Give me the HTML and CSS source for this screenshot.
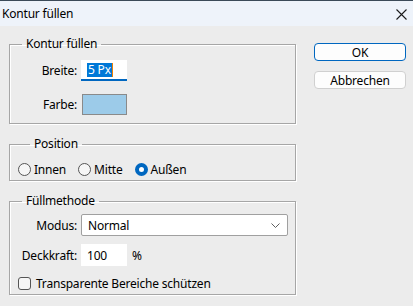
FILE: index.html
```html
<!DOCTYPE html>
<html lang="de">
<head>
    <meta charset="UTF-8">
    <meta name="viewport" content="width=device-width, initial-scale=1.0">
    <title>Kontur füllen</title>
    <link rel="stylesheet" href="styles.css">
</head>
<body>
    <div class="dialog">
        <div class="titlebar">
            <span class="title">Kontur füllen</span>
            <svg class="close" width="11" height="11" viewBox="0 0 11 11">
                <path d="M0.5 0.5 L10.5 10.5 M10.5 0.5 L0.5 10.5" stroke="#1b1b1b" stroke-width="1.1" fill="none"/>
            </svg>
        </div>
        <div class="content">
            <div class="main">
                <fieldset class="group stroke-group">
                    <legend>Kontur füllen</legend>
                    <div class="form-grid">
                        <label class="field-label">Breite:</label>
                        <div class="text-input active"><span class="selection">5 Px</span><span class="caret"></span></div>
                        <label class="field-label">Farbe:</label>
                        <div class="swatch"></div>
                    </div>
                </fieldset>

                <fieldset class="group position-group">
                    <legend>Position</legend>
                    <div class="radio-row">
                        <label class="radio"><span class="radio-dot"></span>Innen</label>
                        <label class="radio"><span class="radio-dot"></span>Mitte</label>
                        <label class="radio"><span class="radio-dot checked"></span>Außen</label>
                    </div>
                </fieldset>

                <fieldset class="group blend-group">
                    <legend>Füllmethode</legend>
                    <div class="form-grid">
                        <label class="field-label">Modus:</label>
                        <div class="select">
                            <span>Normal</span>
                            <svg width="9" height="5" viewBox="0 0 9 5">
                                <path d="M0.5 0.5 L4.5 4.5 L8.5 0.5" stroke="#5f5f5f" stroke-width="1" fill="none"/>
                            </svg>
                        </div>
                        <label class="field-label">Deckkraft:</label>
                        <div class="opacity-row">
                            <div class="text-input plain">100</div>
                            <span class="unit">%</span>
                        </div>
                    </div>
                    <label class="checkbox"><span class="check-box"></span>Transparente Bereiche schützen</label>
                </fieldset>
            </div>
            <div class="actions">
                <button class="btn primary">OK</button>
                <button class="btn">Abbrechen</button>
            </div>
        </div>
    </div>
</body>
</html>
```

FILE: styles.css
```css
* {
    box-sizing: border-box;
}
body {
    margin: 0;
    font-family: "Noto Sans", "Liberation Sans", sans-serif;
    font-size: 12px;
    letter-spacing: -0.2px;
    color: #000;
    background: #ececec;
}
.dialog {
    width: 413px;
    height: 306px;
    background: #ececec;
    overflow: hidden;
}
.titlebar {
    height: 26px;
    background: #eef3fa;
    border-top: 1px solid #3b4a58;
    display: flex;
    align-items: center;
    justify-content: space-between;
    padding: 0 6px 1px 2px;
}
.title {
    font-size: 12px;
}
.close {
    margin-top: 2px;
}
.content {
    display: flex;
    padding-left: 9px;
}
.main {
    width: 287px;
    padding-top: 10px;
}

/* group boxes */
.group {
    margin: 0 0 12px 0;
    border: 1px solid #a6a6a6;
    box-shadow: 1px 1px 0 #fff, inset 1px 1px 0 #fff;
    padding: 0;
    min-width: 0;
}
.group legend {
    margin-left: 12px;
    padding: 0 4px;
    line-height: 16px;
}
.stroke-group {
    padding: 8px 0 8px 0;
}
.position-group {
    padding: 9px 0 2px 8px;
}
.blend-group {
    padding: 5px 7px 2px 0;
}

.form-grid {
    display: grid;
    grid-template-columns: 67px auto;
    column-gap: 4px;
    row-gap: 13px;
    align-items: center;
}
.blend-group .form-grid {
    row-gap: 8px;
}
.field-label {
    text-align: right;
}

.text-input {
    width: 46px;
    height: 21px;
    background: #fff;
    display: flex;
    align-items: center;
    padding-left: 6px;
}
.text-input.active {
    border-bottom: 2px solid #0067c0;
}
.text-input.plain {
    height: 22px;
}
.selection {
    background: #0078d7;
    color: #fff;
    line-height: 14px;
    padding: 0 1px;
}
.caret {
    width: 1px;
    height: 14px;
    background: #f08000;
}
.swatch {
    width: 45px;
    height: 21px;
    margin-left: 1px;
    background: #9ccbe9;
    border: 1px solid #8a8a8a;
}

/* radios and checkbox */
.radio-row {
    display: flex;
    height: 17px;
    align-items: center;
}
.radio {
    display: flex;
    align-items: center;
    margin-right: 12px;
}
.radio-dot {
    width: 13px;
    height: 13px;
    border: 1px solid #555;
    border-radius: 50%;
    margin-right: 3px;
    background: #f6f6f6;
}
.radio-dot.checked {
    border: 4px solid #0067c0;
    background: #fff;
}
.checkbox {
    display: flex;
    align-items: center;
    height: 17px;
    margin: 9px 0 0 8px;
}
.check-box {
    width: 13px;
    height: 13px;
    border: 1px solid #555;
    border-radius: 3px;
    margin-right: 5px;
    background: #f6f6f6;
}

.select {
    height: 22px;
    background: #fff;
    border: 1px solid #a0a0a0;
    border-radius: 2px;
    display: flex;
    align-items: center;
    justify-content: space-between;
    padding: 0 7px 0 6px;
}
.opacity-row {
    display: flex;
    align-items: center;
}
.unit {
    margin-left: 5px;
}

/* buttons */
.actions {
    width: 92px;
    margin-left: 18px;
    padding-top: 17px;
    display: flex;
    flex-direction: column;
    gap: 10px;
}
.btn {
    height: 18px;
    padding: 0;
    font-family: inherit;
    font-size: 12px;
    letter-spacing: inherit;
    background: #fdfdfd;
    border: 1px solid #d0d0d0;
    border-radius: 4px;
    color: #000;
}
.btn.primary {
    border-color: #0067c0;
}
```
